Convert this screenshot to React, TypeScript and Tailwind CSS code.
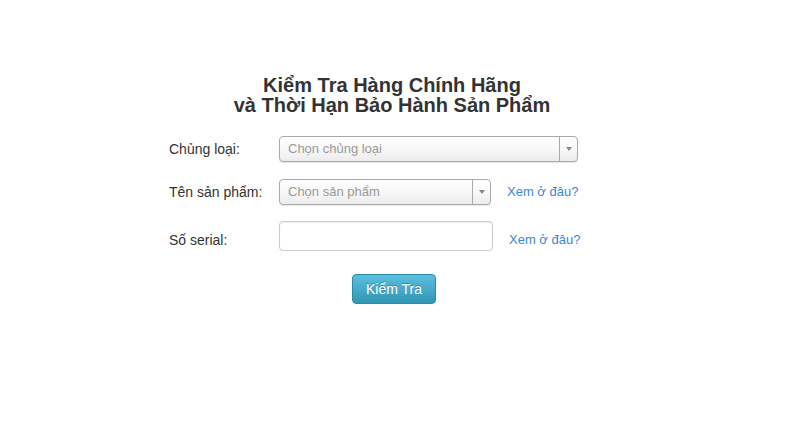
import React from 'react';

const font = { fontFamily: '"Liberation Sans", Arial, sans-serif' };

const FakeSelect = ({ placeholder, width }: { placeholder: string; width: string }) => (
  <div
    className={`${width} h-[26px] flex items-stretch rounded-[4px] border border-[#aaa] bg-gradient-to-b from-white via-[#f8f8f8] to-[#ececec] shadow-[0_1px_1px_rgba(0,0,0,0.1)]`}
  >
    <div className="flex-1 flex items-center pl-[8px] text-[13px] text-[#999]">{placeholder}</div>
    <div className="w-[18px] border-l border-[#aaa] flex items-center justify-center">
      <div className="w-0 h-0 border-l-[3px] border-r-[3px] border-t-[4px] border-l-transparent border-r-transparent border-t-[#888]" />
    </div>
  </div>
);

const HelpLink = () => (
  <a href="#" className="text-[13px] leading-[20px] text-[#3a87d6]">
    Xem ở đâu?
  </a>
);

export default function App() {
  return (
    <div className="w-[800px] h-[429px] bg-white text-[#333]" style={font}>
      <div className="pt-[75px]">
        <h1 className="ml-[162px] w-[460px] text-center text-[20px] leading-[20px] font-bold text-[#333]">
          Kiểm Tra Hàng Chính Hãng
          <br />
          và Thời Hạn Bảo Hành Sản Phẩm
        </h1>

        <div className="ml-[169px] mt-[21px] flex flex-col">
          <div className="flex items-center h-[26px]">
            <label className="w-[110px] text-[14px] leading-[20px]">Chủng loại:</label>
            <FakeSelect placeholder="Chọn chủng loại" width="w-[299px]" />
          </div>

          <div className="flex items-center h-[27px] mt-[16px]">
            <label className="w-[110px] text-[14px] leading-[20px]">Tên sản phẩm:</label>
            <FakeSelect placeholder="Chọn sản phẩm" width="w-[212px]" />
            <div className="ml-[16px] -mt-[2px]">
              <HelpLink />
            </div>
          </div>

          <div className="flex items-start mt-[16px]">
            <label className="w-[110px] pt-[9px] text-[14px] leading-[20px]">Số serial:</label>
            <input
              type="text"
              className="w-[214px] h-[30px] rounded-[4px] border border-[#ccc] bg-white px-[8px] text-[13px] shadow-[inset_0_1px_1px_rgba(0,0,0,0.075)] outline-none"
            />
            <div className="ml-[16px] pt-[6px]">
              <HelpLink />
            </div>
          </div>
        </div>

        <div className="mt-[23px] ml-[352px]">
          <button className="w-[84px] h-[30px] rounded-[4px] border border-[#2a8aa8] bg-gradient-to-b from-[#5bc0de] to-[#2f96b4] text-white text-[14px] [text-shadow:0_-1px_0_rgba(0,0,0,0.25)]">
            Kiểm Tra
          </button>
        </div>
      </div>
    </div>
  );
}
